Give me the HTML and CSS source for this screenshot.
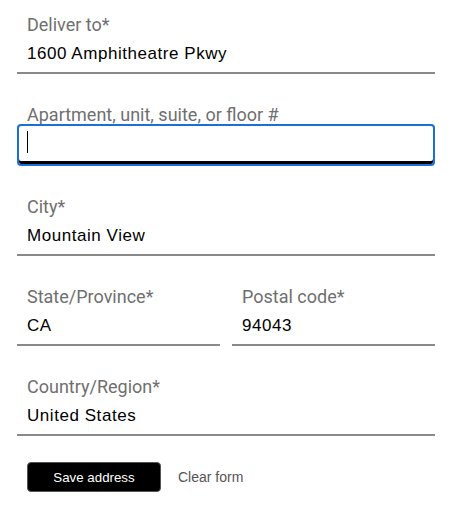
FILE: index.html
```html
<!DOCTYPE html>
<html lang="en">
<head>
<meta charset="utf-8">
<title>Address form</title>
<link rel="stylesheet" href="styles.css">
</head>
<body>
<form class="form">
  <div class="field">
    <label class="label">Deliver to*</label>
    <div class="input">1600 Amphitheatre Pkwy</div>
  </div>
  <div class="field">
    <label class="label">Apartment, unit, suite, or floor #</label>
    <div class="input input-focused"><span class="caret"></span></div>
  </div>
  <div class="field">
    <label class="label">City*</label>
    <div class="input">Mountain View</div>
  </div>
  <div class="row">
    <div class="field">
      <label class="label">State/Province*</label>
      <div class="input">CA</div>
    </div>
    <div class="field">
      <label class="label">Postal code*</label>
      <div class="input">94043</div>
    </div>
  </div>
  <div class="field">
    <label class="label">Country/Region*</label>
    <div class="input">United States</div>
  </div>
  <div class="actions">
    <button type="button" class="btn-save">Save address</button>
    <button type="button" class="btn-clear">Clear form</button>
  </div>
</form>
</body>
</html>
```

FILE: styles.css
```css
html, body {
  margin: 0;
  padding: 0;
  background: #ffffff;
}

.form {
  width: 418px;
  padding: 15px 0 0 17px;
  display: flex;
  flex-direction: column;
  gap: 31px;
}

.field {
  display: flex;
  flex-direction: column;
}

.label {
  font-family: Roboto, "Liberation Sans", sans-serif;
  font-size: 18px;
  line-height: 20px;
  color: #6f6f6f;
  padding-left: 10px;
}

.input {
  position: relative;
  height: 37px;
  border-bottom: 2px solid #8a8a8a;
  padding-left: 10px;
  font-family: "Liberation Sans", Arial, sans-serif;
  font-size: 17px;
  letter-spacing: 0.55px;
  line-height: 37px;
  color: #000;
}

.input-focused {
  box-sizing: border-box;
  height: 42px;
  margin-top: -1px;
  border: 2px solid #1b6fd8;
  border-radius: 4px;
  box-shadow: inset 0 -3px 0 #000;
  padding-left: 8px;
}

.caret {
  position: absolute;
  left: 8px;
  top: 5px;
  width: 1px;
  height: 22px;
  background: #000;
}

.row {
  display: grid;
  grid-template-columns: 1fr 1fr;
  gap: 12px;
}

.actions {
  display: flex;
  align-items: center;
  gap: 17px;
  padding-left: 10px;
  margin-top: -5px;
}

.btn-save {
  width: 134px;
  height: 30px;
  background: #000;
  color: #fff;
  border: 1px solid #555;
  border-radius: 4px;
  font-family: "Liberation Sans", Arial, sans-serif;
  font-size: 13.3px;
  cursor: pointer;
}

.btn-clear {
  background: none;
  border: none;
  padding: 0;
  color: #555;
  font-family: "Liberation Sans", Arial, sans-serif;
  font-size: 14px;
  cursor: pointer;
}
```
